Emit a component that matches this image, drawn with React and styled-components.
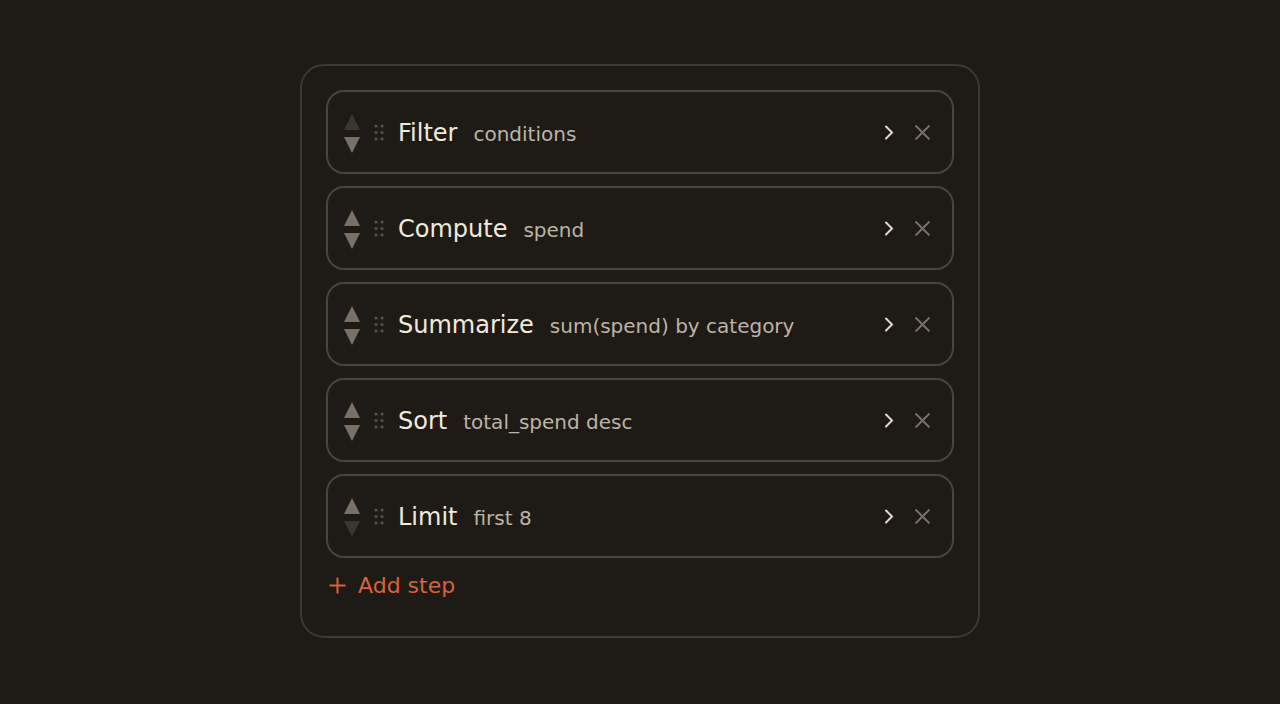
import styled, { createGlobalStyle } from "styled-components";

const GlobalStyle = createGlobalStyle`
  html, body {
    margin: 0;
    padding: 0;
    background: #1e1a16;
  }
  body {
    font-family: "DejaVu Sans", "Liberation Sans", sans-serif;
  }
`;

const Page = styled.div`
  min-height: 100vh;
  box-sizing: border-box;
  padding-bottom: 2px;
  display: flex;
  align-items: center;
  justify-content: center;
`;

const Panel = styled.div`
  width: 628px;
  padding: 24px 24px 36px;
  border: 2px solid #3d3830;
  border-radius: 24px;
  display: flex;
  flex-direction: column;
  gap: 12px;
`;

const Step = styled.div`
  height: 84px;
  box-sizing: border-box;
  border: 2px solid #4a4439;
  border-radius: 18px;
  display: flex;
  align-items: center;
  padding: 1px 21px 0 16px;
`;

const Mover = styled.div`
  display: flex;
  flex-direction: column;
  gap: 7px;
  width: 16px;
  margin-top: 2px;
`;

const MoveButton = styled.button`
  border: none;
  background: none;
  padding: 0;
  width: 16px;
  height: 16px;
  display: block;
  cursor: ${(p) => (p.disabled ? "default" : "pointer")};
  color: ${(p) => (p.disabled ? "#3b3630" : "#7a7164")};
  svg {
    display: block;
  }
`;

const Grip = styled.div`
  margin: 0 14px;
  display: flex;
  color: #57514a;
`;

const Labels = styled.div`
  flex: 1;
  display: flex;
  align-items: baseline;
  gap: 16px;
`;

const Title = styled.span`
  font-size: 24px;
  color: #f1eadc;
`;

const Detail = styled.span`
  font-size: 20px;
  color: #bdb4a4;
`;

const IconButton = styled.button`
  border: none;
  background: none;
  padding: 0;
  display: flex;
  cursor: pointer;
  color: ${(p) => p.$color};
  margin-left: ${(p) => p.$gap}px;
`;

const AddButton = styled.button`
  align-self: flex-start;
  height: 30px;
  border: none;
  background: none;
  padding: 0 0 0 3px;
  display: flex;
  align-items: center;
  gap: 12px;
  color: #d8623a;
  font-family: inherit;
  font-size: 22px;
  cursor: pointer;
`;

const steps = [
  { title: "Filter", detail: "conditions" },
  { title: "Compute", detail: "spend" },
  { title: "Summarize", detail: "sum(spend) by category" },
  { title: "Sort", detail: "total_spend desc" },
  { title: "Limit", detail: "first 8" },
];

const Up = () => (
  <svg width="16" height="16" viewBox="0 0 16 16">
    <path d="M8 0 L16 16 L0 16 Z" fill="currentColor" />
  </svg>
);

const Down = () => (
  <svg width="16" height="16" viewBox="0 0 16 16">
    <path d="M0 0 L16 0 L8 16 Z" fill="currentColor" />
  </svg>
);

// six-dot drag handle
const Dots = () => (
  <svg width="10" height="17" viewBox="0 0 10 17">
    {[2, 8.5, 15].map((y) =>
      [2, 8].map((x) => <circle key={`${x}-${y}`} cx={x} cy={y} r="1.6" fill="currentColor" />)
    )}
  </svg>
);

const Chevron = () => (
  <svg width="11" height="15" viewBox="0 0 11 15">
    <path d="M3 1.5 L9 7.5 L3 13.5" fill="none" stroke="currentColor" strokeWidth="2" strokeLinecap="round" />
  </svg>
);

const Cross = () => (
  <svg width="17" height="17" viewBox="0 0 17 17">
    <path d="M1.5 1.5 L15.5 15.5 M15.5 1.5 L1.5 15.5" fill="none" stroke="currentColor" strokeWidth="1.8" />
  </svg>
);

const Plus = () => (
  <svg width="17" height="17" viewBox="0 0 17 17">
    <path d="M8.5 0.5 V16.5 M0.5 8.5 H16.5" fill="none" stroke="currentColor" strokeWidth="2" />
  </svg>
);

export default function App() {
  return (
    <Page>
      <GlobalStyle />
      <Panel>
        {steps.map((s, i) => (
          <Step key={s.title}>
            <Mover>
              <MoveButton disabled={i === 0} aria-label="Move up">
                <Up />
              </MoveButton>
              <MoveButton disabled={i === steps.length - 1} aria-label="Move down">
                <Down />
              </MoveButton>
            </Mover>
            <Grip>
              <Dots />
            </Grip>
            <Labels>
              <Title>{s.title}</Title>
              <Detail>{s.detail}</Detail>
            </Labels>
            <IconButton $color="#e2d8c6" $gap={0} aria-label="Open">
              <Chevron />
            </IconButton>
            <IconButton $color="#7a7164" $gap={20} aria-label="Remove">
              <Cross />
            </IconButton>
          </Step>
        ))}
        <AddButton>
          <Plus />
          Add step
        </AddButton>
      </Panel>
    </Page>
  );
}
